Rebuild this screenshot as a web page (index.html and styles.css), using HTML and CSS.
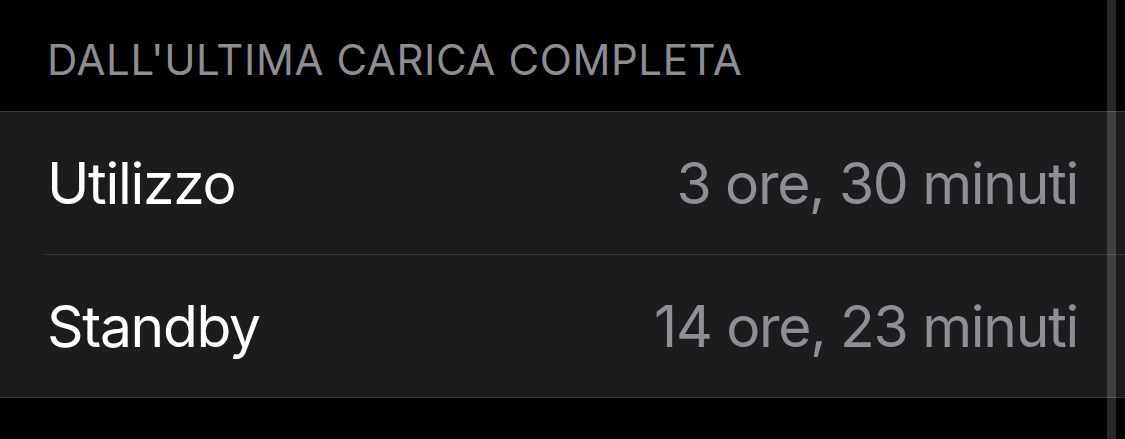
FILE: index.html
```html
<!DOCTYPE html>
<html lang="it">

<head>
    <meta charset="UTF-8">
    <meta name="viewport" content="width=device-width, initial-scale=1.0">
    <title>Batteria</title>
    <link rel="stylesheet" href="styles.css">
</head>

<body>
    <div class="screen">
        <h3 class="section-title">DALL'ULTIMA CARICA COMPLETA</h3>
        <ul class="list">
            <li class="row">
                <span class="label">Utilizzo</span>
                <span class="value">3 ore, 30 minuti</span>
            </li>
            <li class="row">
                <span class="label">Standby</span>
                <span class="value">14 ore, 23 minuti</span>
            </li>
        </ul>
        <div class="scrollbar"></div>
    </div>
</body>

</html>
```

FILE: styles.css
```css
body {
    margin: 0;
    background-color: #000;
    font-family: Inter, "Noto Sans", sans-serif;
}

.screen {
    position: relative;
    height: 439px;
    overflow: hidden;
}

.section-title {
    margin: 0;
    height: 111px;
    box-sizing: border-box;
    padding: 35px 0 0 47px;
    font-size: 42px;
    font-weight: 400;
    line-height: 50px;
    color: #8d8d93;
    letter-spacing: 0.6px;
}

.list {
    list-style: none;
    margin: 0;
    padding: 0 0 0 45px;
    background-color: #1c1c1e;
    border-top: 1px solid #38383a;
    border-bottom: 1px solid #38383a;
}

.row {
    display: flex;
    justify-content: space-between;
    align-items: center;
    height: 142px;
    padding: 0 47px 0 2px;
    font-size: 57px;
    letter-spacing: -1.3px;
}

.row + .row {
    border-top: 1px solid #38383a;
}

.label {
    color: #fff;
}

.value {
    color: #8e8e93;
}

.scrollbar {
    position: absolute;
    top: 0;
    bottom: 0;
    right: 9px;
    width: 9px;
    background-color: rgba(255, 255, 255, 0.16);
}
```
